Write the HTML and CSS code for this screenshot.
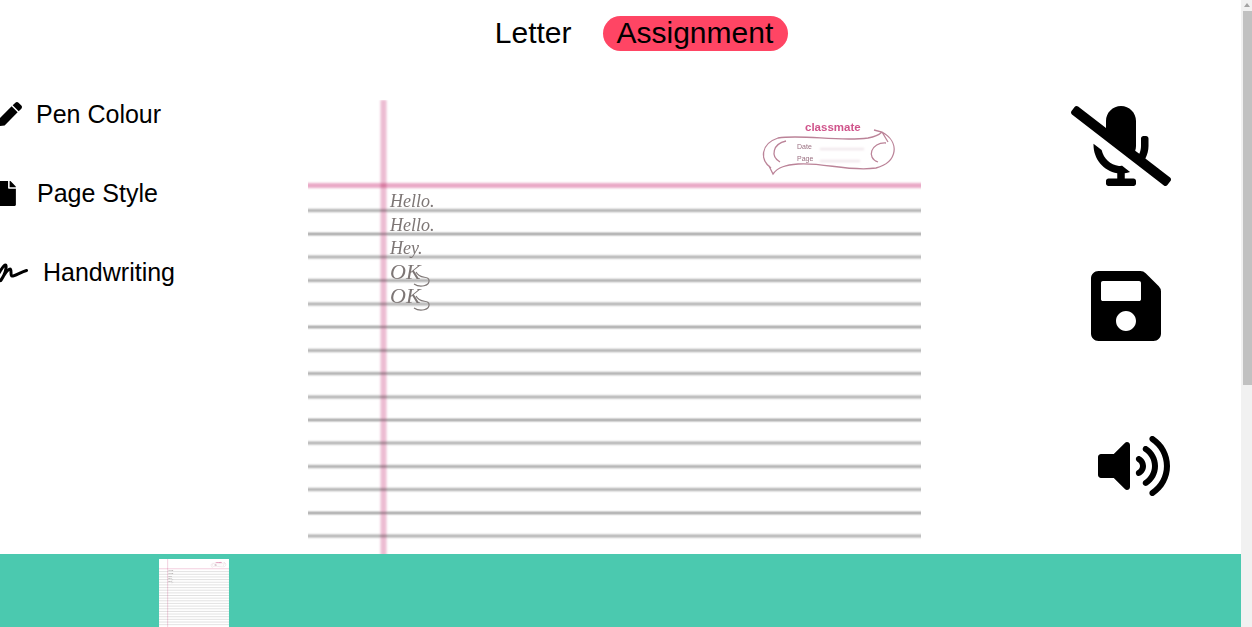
FILE: index.html
```html
<!DOCTYPE html>
<html lang="en">
<head>
<meta charset="utf-8">
<title>Handwriting</title>
<link rel="stylesheet" href="styles.css">
</head>
<body>
<div class="app">
  <div class="main">
    <header class="tabs">
      <span class="tab">Letter</span>
      <span class="tab tab-active">Assignment</span>
    </header>
    <div class="workspace">
      <nav class="tools">
        <div class="tool">
          <svg class="ico ico-pen" viewBox="0 0 512 512"><path d="M290.74 93.24l128.02 128.02-277.99 277.99-114.14 12.6C11.35 513.54-1.56 500.62.14 485.34l12.7-114.22 277.9-278.88zm207.2-19.06l-60.11-60.11c-18.75-18.75-49.16-18.75-67.91 0l-56.55 56.55 128.02 128.02 56.55-56.55c18.75-18.76 18.75-49.16 0-67.91z"/></svg>
          <span>Pen Colour</span>
        </div>
        <div class="tool">
          <svg class="ico ico-file" viewBox="0 0 384 512"><path d="M224 136V0H24C10.7 0 0 10.7 0 24v464c0 13.3 10.7 24 24 24h336c13.3 0 24-10.7 24-24V160H248c-13.2 0-24-10.8-24-24zm160-14.1v6.1H256V0h6.1c6.4 0 12.5 2.5 17 7l97.9 98c4.5 4.5 7 10.6 7 16.9z"/></svg>
          <span>Page Style</span>
        </div>
        <div class="tool">
          <svg class="ico ico-sign" viewBox="0 0 30 22"><path class="sign-stroke" d="M-2 17C1 12 5 5 7 4 9 3 8 10 6 14 4 18 2 21 3 19 6 14 10 8 12 8 14 8 12 15 14 15 17 15 23 11 28.5 9.5"/></svg>
          <span>Handwriting</span>
        </div>
      </nav>
      <svg class="paper" viewBox="0 0 613 454">
        <defs>
          <filter id="soft" x="-2%" y="-2%" width="104%" height="104%"><feGaussianBlur stdDeviation="1"/></filter>
          <filter id="softer" x="-2%" y="-2%" width="104%" height="104%"><feGaussianBlur stdDeviation="0.45"/></filter>
        </defs>
        <g id="sheet">
          <rect class="sheet-bg" width="613" height="600"/>
          <g filter="url(#soft)">
            <path class="rule" d="M-8 110.500H621M-8 157H621M-8 204H621M-8 250.500H621M-8 297H621M-8 343H621M-8 389.500H621M-8 436H621M-8 482.500H621M-8 529H621M-8 575.500H621"/>
            <path class="rule rule-dark" d="M-8 134H621M-8 180.500H621M-8 227H621M-8 273.500H621M-8 320H621M-8 366.500H621M-8 413H621M-8 459.500H621M-8 506H621M-8 552.500H621"/>
            <path class="margin-h" d="M-8 85.500H621"/>
            <path class="margin-v" d="M75.500 0V610"/>
            <path class="banner-rule" d="M512 49H556M512 61H552"/>
          </g>
          <g filter="url(#softer)">
            <path class="banner" d="M463 68C452 60 452 44 470 38 495 34 530 42 560 38 566 37 570 36 574 32M566 30L574 32 580 42M574 32C592 42 590 62 568 68 540 72 515 62 490 64 478 65 470 67 465 74L461 66M478 41C465 44 462 56 472 62M578 43C563 42 558 58 570 62"/>
            <text class="brand" x="497" y="31">classmate</text>
            <text class="brand-small" x="489" y="49">Date</text>
            <text class="brand-small" x="489" y="61">Page</text>
            <text class="ink" x="82" y="107">Hello.</text>
            <text class="ink" x="82" y="131">Hello.</text>
            <text class="ink" x="82" y="154">Hey.</text>
            <text class="ink ink-large" x="82" y="179">OK</text>
            <text class="ink ink-large" x="82" y="203">OK</text>
            <path class="ink-tail" d="M108 172C112 180 120 175 121 180 122 186 112 188 106 184M108 196C112 204 120 199 121 204 122 210 112 212 106 208"/>
          </g>
        </g>
      </svg>
      <aside class="actions">
        <svg class="act act-mic" viewBox="0 0 640 512"><path d="M633.82 458.1l-157.8-121.96C488.61 312.13 496 285.01 496 256v-48c0-8.84-7.16-16-16-16h-16c-8.84 0-16 7.16-16 16v48c0 17.92-3.96 34.8-10.72 50.2l-26.55-20.52c3.1-9.4 5.28-19.22 5.28-29.67V96c0-53.02-42.98-96-96-96s-96 42.98-96 96v45.36L45.47 3.37C38.49-2.05 28.43-.8 23.01 6.18L3.37 31.45C-2.05 38.42-.8 48.47 6.18 53.9l588.36 454.73c6.98 5.43 17.03 4.17 22.46-2.81l19.64-25.27c5.42-6.97 4.17-17.02-2.82-22.45zM400 464h-56v-33.77c11.66-1.6 22.85-4.54 33.67-8.31l-50.11-38.73c-6.71.4-13.41.87-20.35.2-55.85-5.45-98.74-48.63-111.18-101.85L144 241.31v6.85c0 89.64 63.97 169.55 152 181.69V464h-56c-8.84 0-16 7.16-16 16v16c0 8.84 7.16 16 16 16h160c8.84 0 16-7.16 16-16v-16c0-8.84-7.16-16-16-16z"/></svg>
        <svg class="act act-save" viewBox="0 0 448 512"><path d="M433.941 129.941l-83.882-83.882A48 48 0 0 0 316.118 32H48C21.49 32 0 53.49 0 80v352c0 26.51 21.49 48 48 48h352c26.51 0 48-21.49 48-48V163.882a48 48 0 0 0-14.059-33.941zM224 416c-35.346 0-64-28.654-64-64 0-35.346 28.654-64 64-64s64 28.654 64 64c0 35.346-28.654 64-64 64zm96-308V212c0 6.627-5.373 12-12 12H76c-6.627 0-12-5.373-12-12V108c0-6.627 5.373-12 12-12h232c6.627 0 12 5.373 12 12z"/></svg>
        <svg class="act act-vol" viewBox="0 0 576 512"><path d="M215.03 71.05L126.06 160H24c-13.26 0-24 10.74-24 24v144c0 13.25 10.74 24 24 24h102.06l88.97 88.95c15.03 15.03 40.97 4.47 40.97-16.97V88.02c0-21.46-25.96-32-40.97-16.97zm233.32-51.08c-11.17-7.33-26.18-4.24-33.51 6.95-7.34 11.17-4.22 26.18 6.95 33.51 66.27 43.49 105.82 116.6 105.82 195.58 0 78.98-39.55 152.09-105.82 195.58-11.17 7.32-14.29 22.34-6.95 33.5 7.04 10.71 21.93 14.56 33.51 6.95C528.27 439.58 576 351.33 576 256S528.27 72.43 448.35 19.97zM480 256c0-63.53-32.06-121.94-85.77-156.24-11.19-7.14-26.03-3.82-33.12 7.46s-3.78 26.21 7.41 33.36C408.27 165.97 432 209.11 432 256s-23.73 90.03-63.48 115.42c-11.19 7.14-14.5 22.07-7.41 33.36 6.51 10.36 21.12 15.14 33.12 7.46C447.94 377.94 480 319.54 480 256zm-141.77-76.87c-11.58-6.33-26.19-2.16-32.61 9.45-6.39 11.61-2.16 26.2 9.45 32.61C327.98 228.28 336 241.63 336 256c0 14.38-8.02 27.72-20.92 34.81-11.61 6.41-15.84 21-9.45 32.61 6.43 11.66 21.05 15.8 32.61 9.45 28.23-15.55 45.77-45 45.77-76.88s-17.54-61.32-45.78-76.86z"/></svg>
      </aside>
    </div>
    <footer class="tray">
      <svg class="thumb" viewBox="0 0 613 596"><use href="#sheet"/></svg>
    </footer>
  </div>
  <div class="scrollbar">
    <div class="scroll-arrow"></div>
    <div class="scroll-thumb"></div>
  </div>
</div>
</body>
</html>
```

FILE: styles.css
```css
* {
  box-sizing: border-box;
}

html,
body {
  margin: 0;
  height: 100%;
  overflow: hidden;
  background: #fff;
}

body {
  font-family: "Liberation Sans", Arial, sans-serif;
  color: #000;
}

.app {
  display: flex;
  height: 100vh;
}

.main {
  flex: 1;
  min-width: 0;
  display: flex;
  flex-direction: column;
  overflow: hidden;
}

/* Tabs */
.tabs {
  flex: 0 0 66px;
  display: flex;
  justify-content: center;
  align-items: flex-start;
  gap: 17px;
  padding: 16px 0 0 29px;
  font-size: 30px;
  line-height: 34px;
}

.tab {
  padding: 0 15px 0 13px;
  height: 35px;
  border-radius: 18px;
}

.tab-active {
  background: #ff4564;
}

/* Workspace */
.workspace {
  flex: 1;
  min-height: 0;
  display: flex;
  padding-top: 34px;
}

.tools {
  flex: 0 0 308px;
  display: flex;
  flex-direction: column;
  gap: 51px;
  font-size: 25px;
  overflow: hidden;
}

.tool {
  display: flex;
  align-items: center;
  height: 28px;
  line-height: 28px;
}

.ico {
  flex: none;
  display: block;
}

.ico-pen {
  width: 24px;
  height: 24px;
  margin: -1px 14px 0 -2px;
}

.ico-file {
  width: 19px;
  height: 25px;
  margin: 0 21px 0 -3px;
}

.ico-sign {
  width: 30px;
  height: 22px;
  margin: 0 15px 0 -2px;
}

.sign-stroke {
  fill: none;
  stroke: #000;
  stroke-width: 3;
  stroke-linecap: round;
  stroke-linejoin: round;
}

/* Paper */
.paper {
  flex: none;
  display: block;
  width: 613px;
  height: 454px;
}

.sheet-bg {
  fill: #fff;
}

.rule {
  fill: none;
  stroke: #a0a0a0;
  stroke-width: 2.6;
}

.rule-dark {
  stroke: #858585;
  stroke-width: 2.2;
}

.margin-h {
  fill: none;
  stroke: #eaa9c6;
  stroke-width: 5;
}

.margin-v {
  fill: none;
  stroke: #ecbcd2;
  stroke-width: 6;
  mix-blend-mode: multiply;
}

.banner {
  fill: none;
  stroke: #bb8398;
  stroke-width: 1.3;
}

.banner-rule {
  fill: none;
  stroke: #dcc8d0;
  stroke-width: 1;
}

.brand {
  font-family: "Liberation Sans", sans-serif;
  font-size: 11.5px;
  font-weight: 700;
  fill: #d0558c;
}

.brand-small {
  font-family: "Liberation Sans", sans-serif;
  font-size: 7px;
  fill: #9a6f80;
}

.ink {
  font-family: "Liberation Serif", serif;
  font-style: italic;
  font-size: 18px;
  fill: #7d7675;
}

.ink-large {
  font-size: 22px;
}

.ink-tail {
  fill: none;
  stroke: #7d7675;
  stroke-width: 1.1;
}

/* Right actions */
.actions {
  flex: 1;
  min-width: 0;
  display: flex;
  flex-direction: column;
  align-items: flex-start;
  padding-top: 6px;
}

.act {
  flex: none;
  display: block;
}

.act-mic {
  width: 100px;
  height: 80px;
  margin-left: 150px;
}

.act-save {
  width: 70px;
  height: 80px;
  margin: 80px 0 0 170px;
}

.act-vol {
  width: 72px;
  height: 64px;
  margin: 88px 0 0 177px;
}

/* Bottom tray */
.tray {
  flex: 0 0 73px;
  background: #4bc9af;
  padding: 5px 0 0 159px;
  overflow: hidden;
}

.thumb {
  display: block;
  width: 70px;
  height: 68px;
}

/* Scrollbar */
.scrollbar {
  flex: 0 0 11px;
  background: #f1f1f1;
  padding-left: 2px;
}

.scroll-arrow {
  width: 0;
  height: 0;
  margin: 3px 0 4px 1px;
  border-left: 3px solid transparent;
  border-right: 3px solid transparent;
  border-bottom: 4px solid #a3a3a3;
}

.scroll-thumb {
  height: 374px;
  background: #c1c1c1;
}
```
